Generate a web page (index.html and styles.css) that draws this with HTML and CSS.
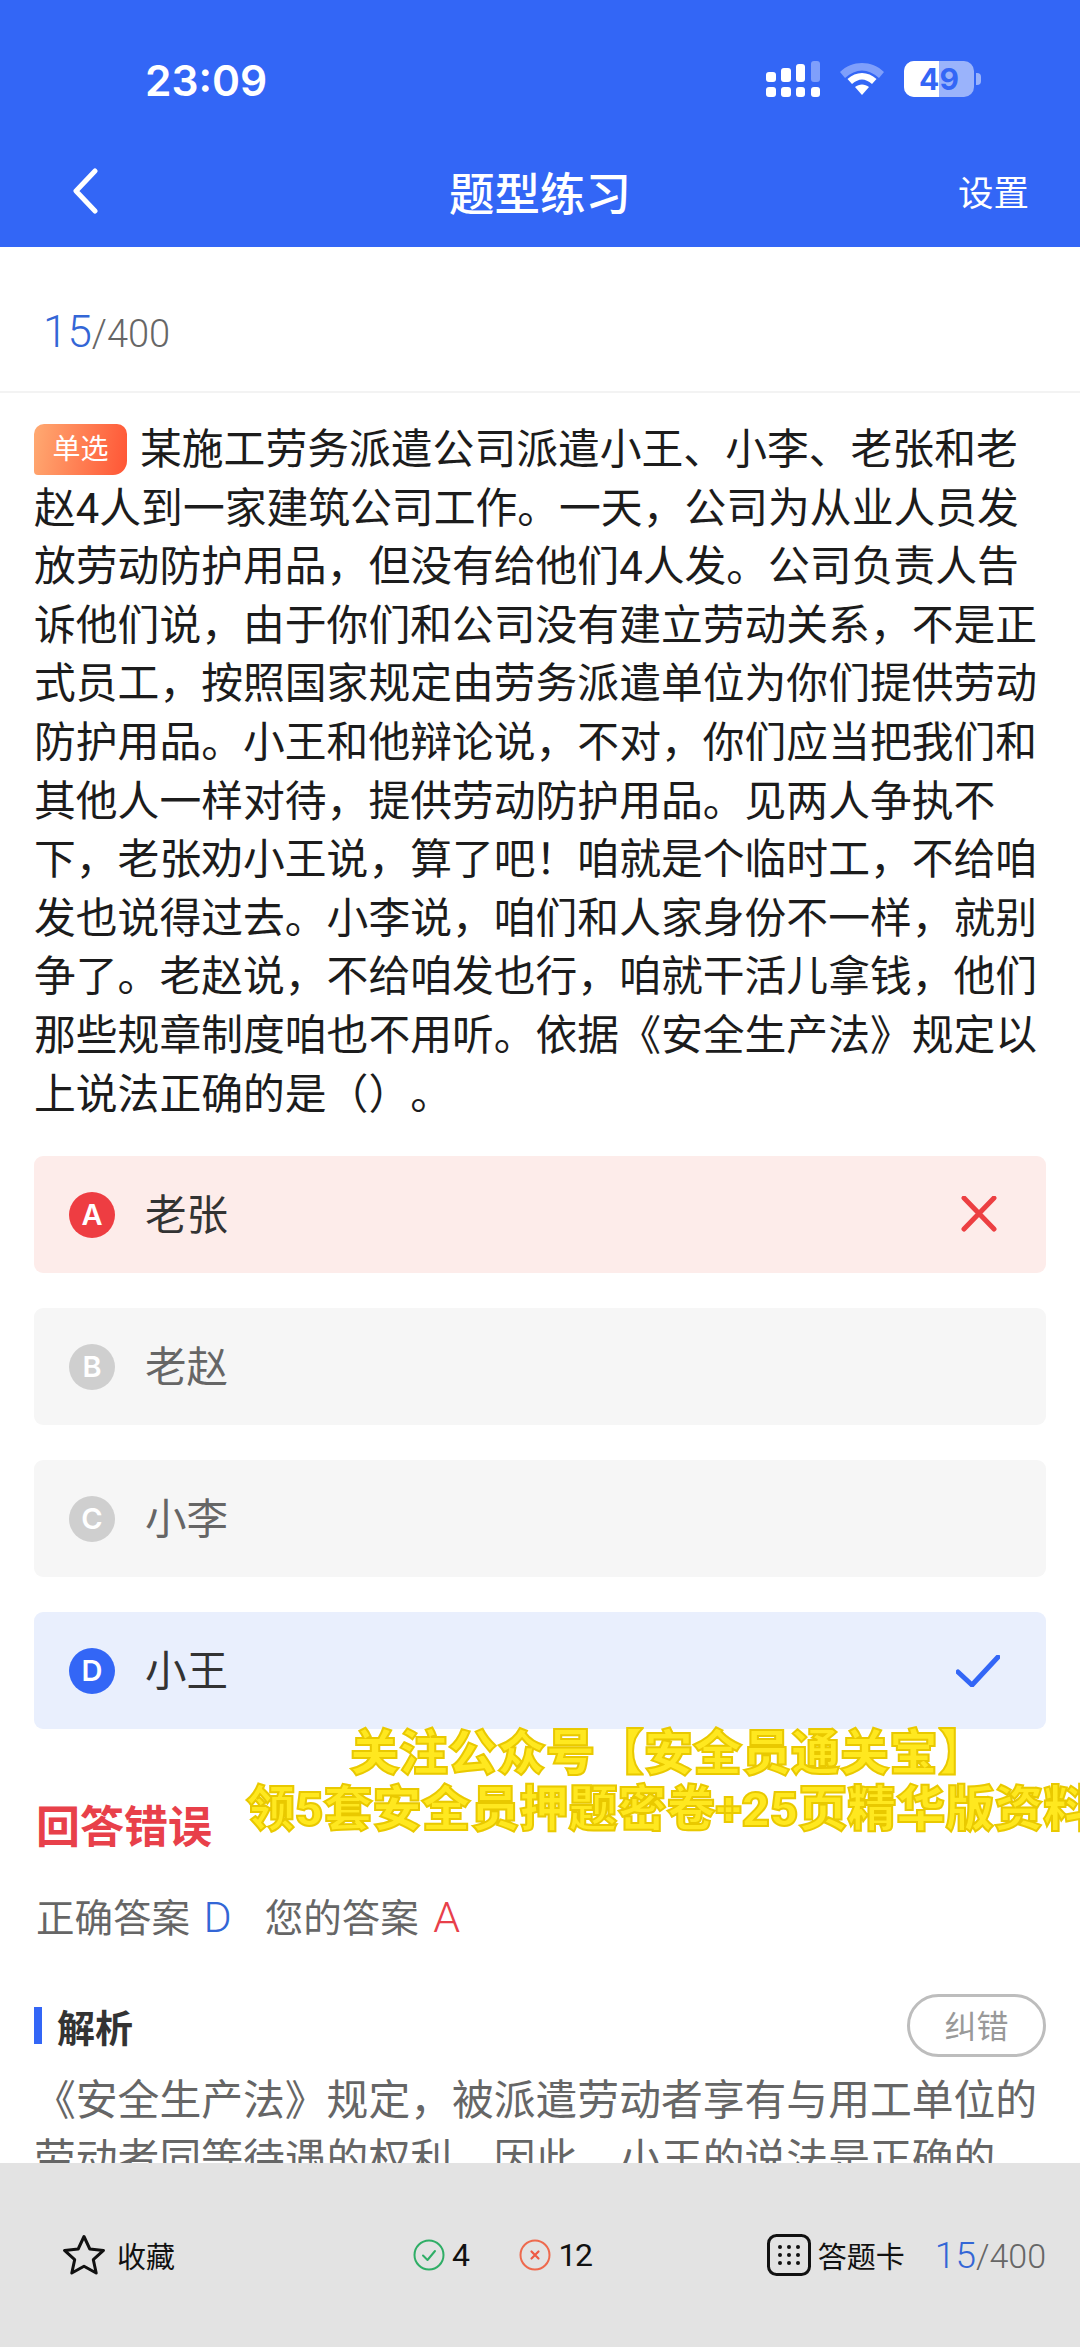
FILE: index.html
```html
<!DOCTYPE html>
<html lang="zh-CN">
<head>
<meta charset="utf-8">
<title>题型练习</title>
<link rel="stylesheet" href="styles.css">
</head>
<body>
<div class="page">
  <header class="header">
    <div class="status">
      <span class="time">23:09</span>
      <div class="status-icons">
        <svg class="signal" width="54" height="36" viewBox="0 0 54 36">
          <g fill="#fff">
            <rect x="0" y="11" width="10" height="10" rx="3"/>
            <rect x="15" y="7" width="10" height="14" rx="3"/>
            <rect x="30" y="3" width="9" height="18" rx="3"/>
            <rect x="45" y="0" width="9" height="21" rx="3" fill="#7f9ffb"/>
            <rect x="0" y="26" width="10" height="10" rx="3"/>
            <rect x="15" y="26" width="10" height="10" rx="3"/>
            <rect x="30" y="26" width="9" height="10" rx="3"/>
            <rect x="45" y="26" width="9" height="10" rx="3"/>
          </g>
        </svg>
        <svg class="wifi" width="48" height="36" viewBox="0 0 48 36">
          <path d="M2 11 C14 -1 34 -1 46 11 L41 17 C30 7 18 7 7 17 Z" fill="#7f9ffb"/>
          <path d="M9.5 18 C18 10 30 10 38.500 18 L34 23 C27 17 21 17 14 23 Z" fill="#fff"/>
          <path d="M17 26 C21 22.500 27 22.500 31 26 L24 34 Z" fill="#fff"/>
        </svg>
        <div class="battery">
          <div class="battery-body"><span class="battery-level"></span><span class="battery-num">49</span></div>
          <span class="battery-nub"></span>
        </div>
      </div>
    </div>
    <nav class="nav">
      <svg class="back" width="26" height="46" viewBox="0 0 26 46"><path d="M23 3 L4 23 L23 43" fill="none" stroke="#fff" stroke-width="5" stroke-linecap="round" stroke-linejoin="round"/></svg>
      <h1 class="title">题型练习</h1>
      <span class="settings">设置</span>
    </nav>
  </header>

  <main class="main">
    <div class="progress"><span class="progress-cur">15</span><span class="progress-total">/400</span></div>
    <div class="content">
      <p class="question"><span class="badge">单选</span>某施工劳务派遣公司派遣小王、小李、老张和老赵4人到一家建筑公司工作。一天，公司为从业人员发放劳动防护用品，但没有给他们4人发。公司负责人告诉他们说，由于你们和公司没有建立劳动关系，不是正式员工，按照国家规定由劳务派遣单位为你们提供劳动防护用品。小王和他辩论说，不对，你们应当把我们和其他人一样对待，提供劳动防护用品。见两人争执不下，老张劝小王说，算了吧！咱就是个临时工，不给咱发也说得过去。小李说，咱们和人家身份不一样，就别争了。老赵说，不给咱发也行，咱就干活儿拿钱，他们那些规章制度咱也不用听。依据《安全生产法》规定以上说法正确的是（）。</p>
      <ul class="options">
        <li class="option option-wrong">
          <span class="letter letter-wrong">A</span><span class="option-text">老张</span>
          <svg class="mark mark-x" width="36" height="36" viewBox="0 0 36 36"><path d="M3 2 L33 33 M33 2 L3 33" fill="none" stroke="#ec3f42" stroke-width="5" stroke-linecap="round"/></svg>
        </li>
        <li class="option">
          <span class="letter">B</span><span class="option-text option-text-muted">老赵</span>
        </li>
        <li class="option">
          <span class="letter">C</span><span class="option-text option-text-muted">小李</span>
        </li>
        <li class="option option-right">
          <span class="letter letter-right">D</span><span class="option-text">小王</span>
          <svg class="mark" width="44" height="32" viewBox="0 0 44 32"><path d="M2 17 L16 30 L42 2" fill="none" stroke="#3366f6" stroke-width="5" stroke-linecap="round" stroke-linejoin="round"/></svg>
        </li>
      </ul>
      <h2 class="result">回答错误</h2>
      <p class="answers">正确答案 <span class="ans-blue">D</span><span class="ans-gap">您的答案 <span class="ans-red">A</span></span></p>
      <div class="analysis-head">
        <h3 class="analysis-title">解析</h3>
        <span class="pill">纠错</span>
      </div>
      <p class="analysis">《安全生产法》规定，被派遣劳动者享有与用工单位的劳动者同等待遇的权利。因此，小王的说法是正确的。</p>
    </div>
  </main>

  <footer class="footer">
    <div class="foot-fav">
      <svg width="44" height="42" viewBox="0 0 44 42"><path d="M22 2.500 L27.800 15 L41.500 16.400 L31.300 25.600 L34.200 39 L22 32.200 L9.800 39 L12.700 25.600 L2.500 16.400 L16.200 15 Z" fill="none" stroke="#111" stroke-width="3" stroke-linejoin="round"/></svg>
      <span>收藏</span>
    </div>
    <div class="foot-stats">
      <span class="stat">
        <svg width="32" height="32" viewBox="0 0 32 32"><circle cx="16" cy="16" r="14.500" fill="none" stroke="#2fae66" stroke-width="2"/><path d="M10 16.500 L14.500 21 L22 12" fill="none" stroke="#2fae66" stroke-width="2" stroke-linecap="round" stroke-linejoin="round"/></svg>
        <span>4</span>
      </span>
      <span class="stat">
        <svg width="32" height="32" viewBox="0 0 32 32"><circle cx="16" cy="16" r="14.500" fill="none" stroke="#ee6a4e" stroke-width="2"/><path d="M12.500 12.500 L19.500 19.500 M19.500 12.500 L12.500 19.500" fill="none" stroke="#ee5a44" stroke-width="2.200" stroke-linecap="round"/></svg>
        <span>12</span>
      </span>
    </div>
    <div class="foot-card">
      <svg width="44" height="42" viewBox="0 0 44 42">
        <rect x="1.500" y="1.500" width="41" height="39" rx="8" fill="none" stroke="#111" stroke-width="3"/>
        <g fill="#111">
          <circle cx="13" cy="13" r="2"/><circle cx="22" cy="13" r="2"/><circle cx="31" cy="13" r="2"/>
          <circle cx="13" cy="21" r="2"/><circle cx="22" cy="21" r="2"/><circle cx="31" cy="21" r="2"/>
          <circle cx="13" cy="29" r="2"/><circle cx="22" cy="29" r="2"/><circle cx="31" cy="29" r="2"/>
        </g>
      </svg>
      <span class="foot-card-label">答题卡</span>
      <span class="foot-progress"><span class="foot-cur">15</span><span class="foot-total">/400</span></span>
    </div>
  </footer>

  <div class="watermark">
    <div class="wm-line wm-first">关注公众号【安全员通关宝】</div>
    <div class="wm-line">领5套安全员押题密卷+25页精华版资料</div>
  </div>
</div>
</body>
</html>
```

FILE: styles.css
```css
* { box-sizing: border-box; margin: 0; padding: 0; }
html, body { width: 1080px; height: 2347px; overflow: hidden; background: #fff; }
body { font-family: Roboto, "Noto Sans CJK SC", sans-serif; color: #222; text-spacing-trim: space-all; }

.page { position: relative; width: 1080px; height: 2347px; display: flex; flex-direction: column; overflow: hidden; }

.header { flex: none; height: 247px; background: #3366f6; color: #fff; }
.status { height: 146px; padding: 61px 99px 0 145px; display: flex; justify-content: space-between; align-items: flex-start; }
.time { font-family: Inter, sans-serif; font-weight: 600; font-size: 42.5px; line-height: 40px; }
.status-icons { display: flex; align-items: center; gap: 18px; }
.signal, .wifi { display: block; }
.battery { display: flex; align-items: center; gap: 2px; }
.battery-body { position: relative; width: 70px; height: 36px; border-radius: 10px; background: #9ab3fb; overflow: hidden; display: flex; align-items: center; justify-content: center; }
.battery-level { position: absolute; left: 0; top: 0; bottom: 0; width: 35px; background: #fff; }
.battery-num { position: relative; font-family: Inter, sans-serif; font-weight: 700; font-size: 30px; line-height: 36px; color: #3366f6; }
.battery-nub { width: 5px; height: 12px; background: #9ab3fb; border-radius: 0 4px 4px 0; }

.nav { position: relative; height: 101px; padding: 0 51px 0 72px; display: flex; align-items: flex-start; justify-content: space-between; }
.back { margin-top: 22px; }
.title { position: absolute; left: 0; right: 0; top: 20px; text-align: center; font-family: "Noto Sans CJK SC", sans-serif; font-size: 45.5px; line-height: 50px; font-weight: 500; }
.settings { margin-top: 23px; font-family: "Noto Sans CJK SC", sans-serif; font-size: 35.5px; line-height: 44px; }

.main { flex: 1; min-height: 0; overflow: hidden; }
.progress { height: 146px; padding: 0 43px; border-bottom: 2px solid #f3f3f3; display: flex; align-items: baseline; line-height: 170px; font-weight: 300; }
.progress-cur { font-size: 44px; color: #3366d6; }
.progress-total { font-size: 38px; color: #666; }

.content { padding: 28px 34px 0 34px; }
.question { font-family: Roboto, "Noto Sans CJK SC", sans-serif; font-size: 41.8px; line-height: 58.6px; color: #1c1c1c; }
.badge { display: inline-block; vertical-align: top; width: 93px; height: 51px; margin-top: 3px; margin-right: 13px; border-radius: 10px 10px 14px 4px; background: linear-gradient(100deg, #ffaa72, #ff5535); color: #fff; text-align: center; font-size: 28px; line-height: 51px; }

.options { list-style: none; margin-top: 32px; display: flex; flex-direction: column; gap: 35px; }
.option { height: 117px; padding: 0 46px 0 35px; border-radius: 9px; background: #f6f6f6; display: flex; align-items: center; }
.option-wrong { background: #fdecea; }
.option-right { background: #e9effd; }
.letter { flex: none; width: 46px; height: 46px; border-radius: 50%; background: #cfcfcf; color: #fff; font-family: Inter, sans-serif; font-weight: 600; font-size: 29px; line-height: 46px; text-align: center; }
.letter-wrong { background: #ee3d42; }
.letter-right { background: #3366f6; }
.option-text { margin: -5px 0 0 30px; flex: 1; font-family: "Noto Sans CJK SC", sans-serif; font-size: 41.5px; line-height: 50px; color: #333; }
.option-text-muted { color: #666; }
.mark-x { margin-right: 3px; margin-top: -2px; }

.result { margin-top: 65px; margin-left: 2px; font-family: "Noto Sans CJK SC", sans-serif; font-size: 44px; line-height: 60px; font-weight: 700; color: #e8404a; }
.answers { margin-top: 40px; margin-left: 2px; font-size: 38.5px; line-height: 50px; height: 50px; color: #666; }
.ans-blue { margin-left: 4px; color: #3366d6; font-size: 43px; font-weight: 300; line-height: 0; }
.ans-red { margin-left: 5px; color: #e8404a; font-size: 43px; font-weight: 300; line-height: 0; }
.ans-gap { margin-left: 33px; }

.analysis-head { margin-top: 50px; height: 63px; display: flex; align-items: center; justify-content: space-between; }
.analysis-title { border-left: 8px solid #3366f6; padding-left: 15px; font-family: "Noto Sans CJK SC", sans-serif; font-size: 38px; line-height: 37px; font-weight: 700; color: #333; }
.pill { width: 139px; height: 63px; border: 3px solid #bdbdbd; border-radius: 32px; color: #999; font-family: "Noto Sans CJK SC", sans-serif; font-size: 32px; line-height: 55px; text-align: center; }
.analysis { margin-top: 15px; font-size: 41.8px; line-height: 58.6px; color: #666; }

.footer { flex: none; height: 184px; background: #e3e3e3; padding: 0 34px 0 62px; display: flex; align-items: flex-start; font-family: Roboto, "Noto Sans CJK SC", sans-serif; color: #111; }
.foot-fav { width: 353px; height: 138px; padding-top: 46px; display: flex; align-items: center; gap: 11px; font-size: 29px; }
.foot-stats { width: 356px; padding-top: 76px; display: flex; gap: 51px; align-items: flex-start; font-size: 32px; letter-spacing: -1.5px; }
.stat { display: flex; align-items: center; gap: 7px; line-height: 32px; }
.foot-card { height: 138px; padding-top: 46px; display: flex; align-items: center; font-size: 29px; gap: 7px; }
.foot-card-label { width: 110px; }
.foot-progress { display: flex; align-items: baseline; font-weight: 300; }
.foot-cur { font-size: 37px; color: #3366d6; }
.foot-total { font-size: 34px; color: #666; }

.watermark { position: absolute; left: 246px; top: 1726px; width: 820px; font-family: Roboto, "Noto Sans CJK SC", sans-serif; font-weight: 900; font-size: 49px; line-height: 56px; color: #ffe81f; -webkit-text-stroke: 2px #e9c900; white-space: nowrap; }
.wm-first { margin-left: 104px; }
```
